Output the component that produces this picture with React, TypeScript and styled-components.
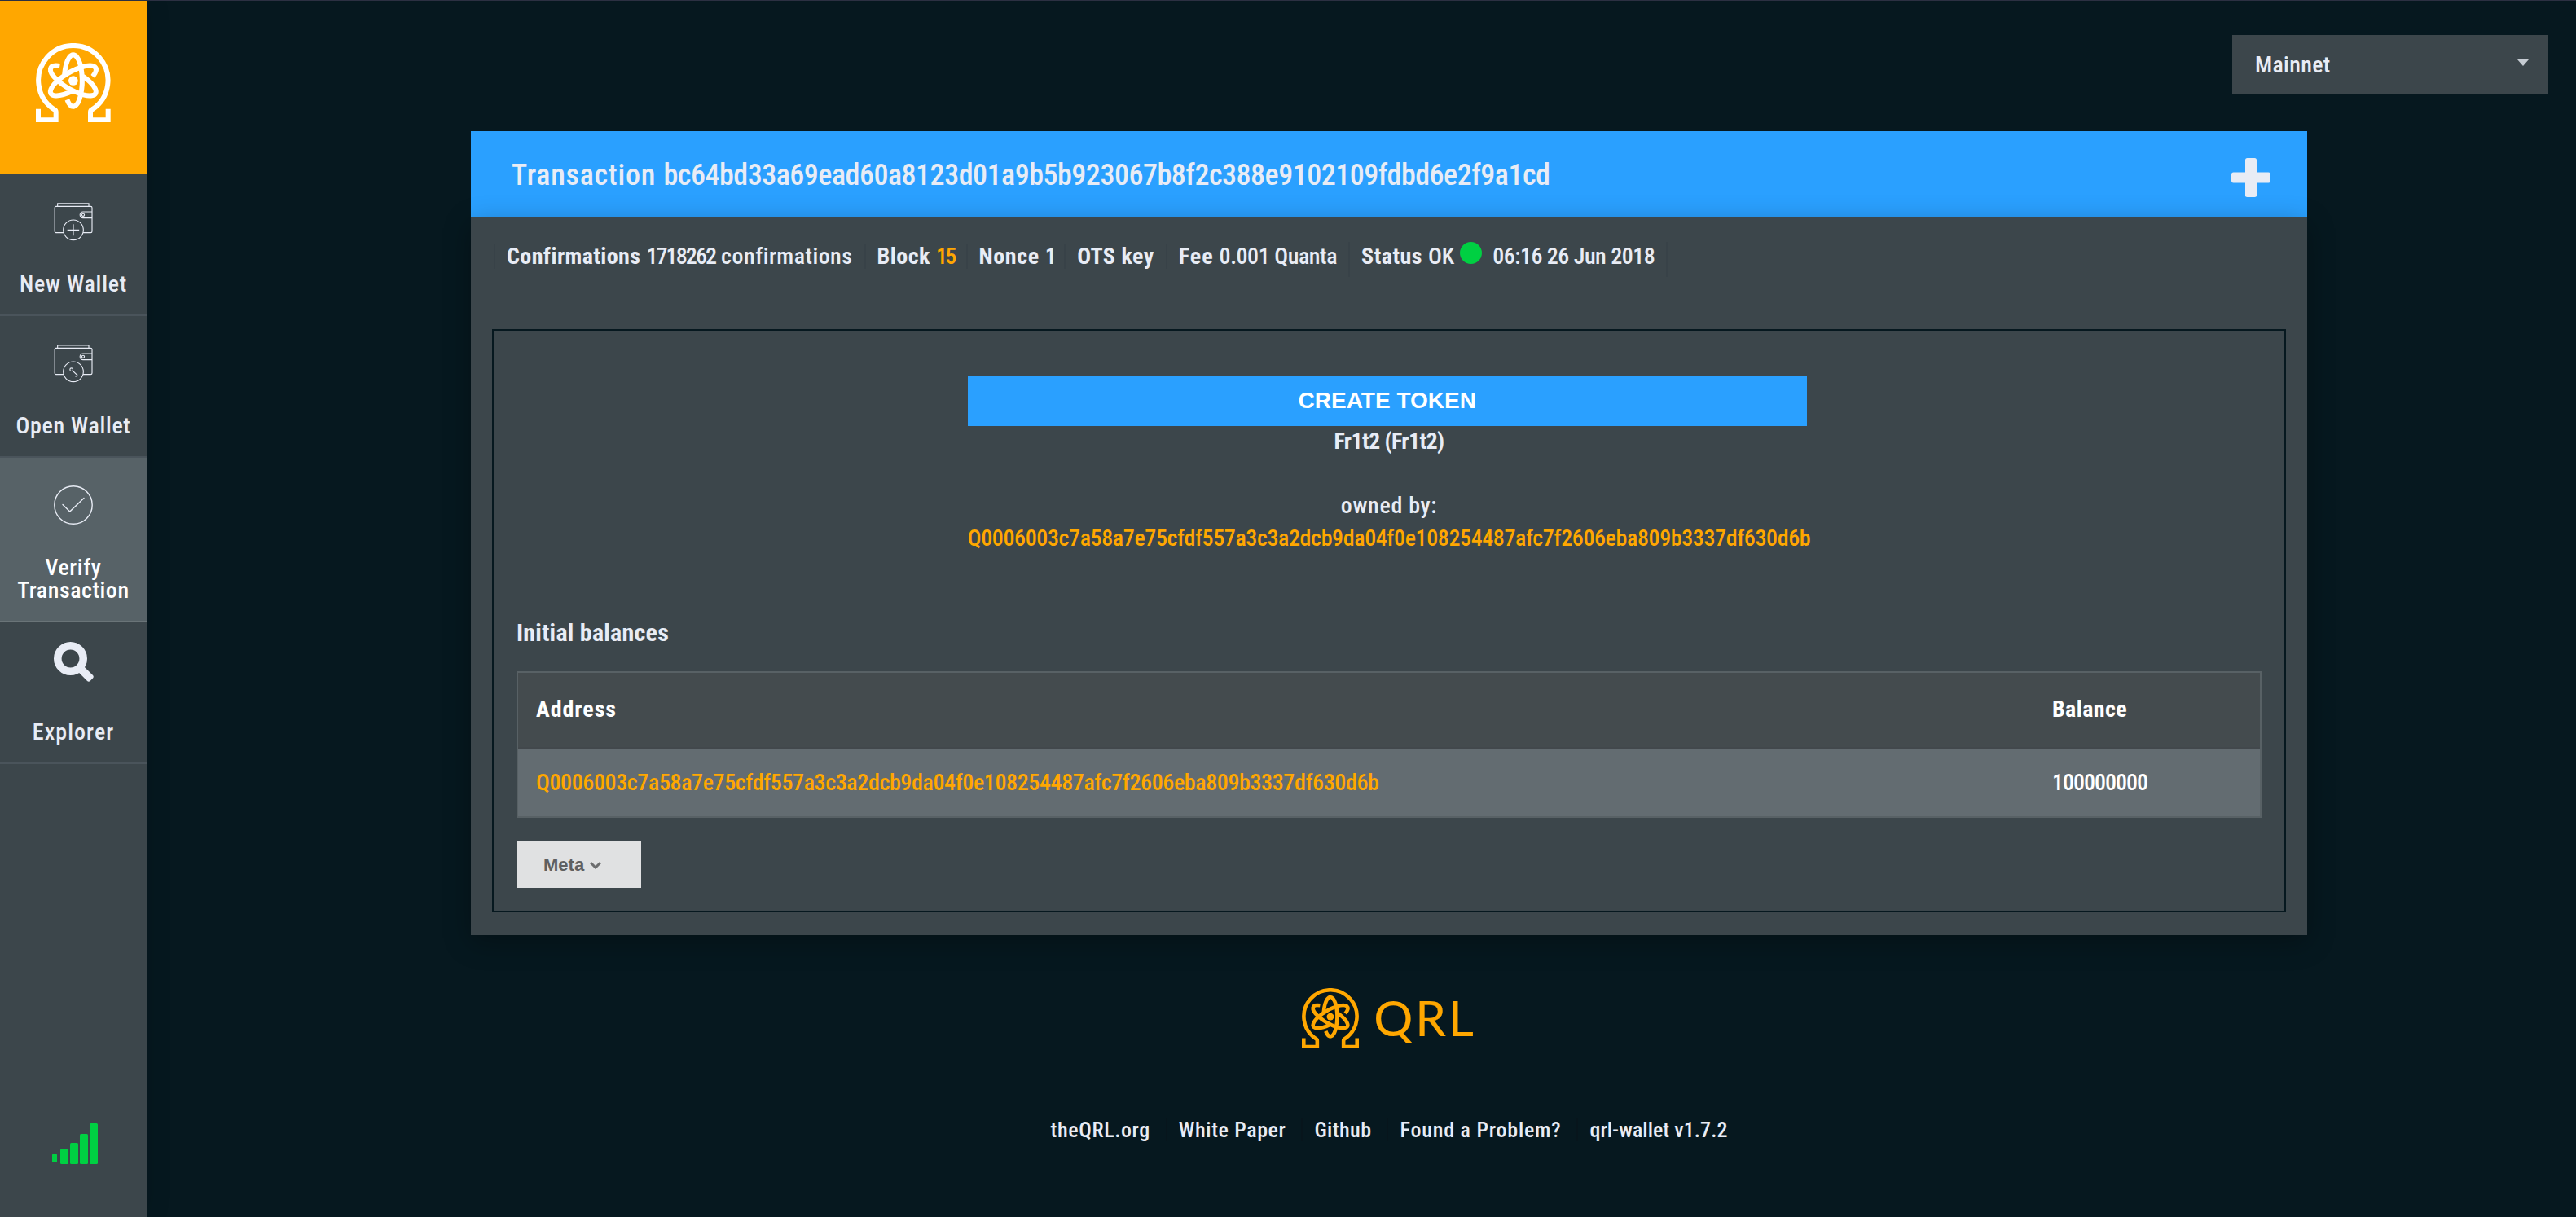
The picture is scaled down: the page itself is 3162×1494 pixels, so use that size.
import React from 'react';
import styled, { createGlobalStyle } from 'styled-components';

const c = {
  page: '#06181f',
  panel: '#3c464b',
  orange: '#ffa700',
  blue: '#2aa0ff',
  text: '#e8ecf5',
  green: '#00d042',
};
const din = `'Roboto Condensed', Roboto, 'Liberation Sans', sans-serif`;

const Global = createGlobalStyle`
  * { box-sizing: border-box; }
  body { margin: 0; background: ${c.page}; }
`;

const Page = styled.div`
  display: flex;
  height: 1494px;
  border-top: 1px solid #2c3042;
  font: 500 28px/28px ${din};
  color: ${c.text};
  overflow: hidden;
`;

const Text = styled.span<{ $ls?: number; $bold?: boolean; $color?: string }>`
  letter-spacing: ${p => p.$ls ?? 0}px;
  white-space: nowrap;
  ${p => p.$bold && 'font-weight: 700;'}
  ${p => p.$color && `color: ${p.$color};`}
`;

/* ---------- sidebar ---------- */
const Sidebar = styled.nav`
  display: flex;
  flex-direction: column;
  flex: none;
  width: 180px;
  background: ${c.panel};
  box-shadow: 0 0 30px rgba(0, 0, 0, 0.12);
`;
const Brand = styled.div`
  display: flex;
  justify-content: center;
  height: 213px;
  padding-top: 52px;
  background: ${c.orange};
`;
const NavItem = styled.a<{ $active?: boolean }>`
  display: flex;
  flex-direction: column;
  align-items: center;
  padding-bottom: 23px;
  border-bottom: 2px solid ${p => (p.$active ? '#6a7478' : '#4a545b')};
  background: ${p => (p.$active ? '#576267' : 'transparent')};
  color: ${p => (p.$active ? '#fff' : c.text)};
`;
const NavIcon = styled.div<{ $top: number }>`
  display: flex;
  height: 121px;
  padding-top: ${p => p.$top}px;
`;
const Signal = styled.div`
  display: flex;
  justify-content: center;
  margin-top: auto;
  padding: 0 0 65px 4px;
`;

/* ---------- content ---------- */
const Main = styled.main`
  display: flex;
  flex-direction: column;
  flex: 1;
`;
const TopBar = styled.div`
  display: flex;
  justify-content: flex-end;
  padding: 42px 34px 46px 0;
`;
const NetworkSelect = styled.div`
  display: flex;
  align-items: center;
  justify-content: space-between;
  width: 388px;
  height: 72px;
  padding: 2px 24px 0 28px;
  background: ${c.panel};
`;
const Caret = styled.i`
  margin-top: -7px;
  border: solid transparent;
  border-width: 8px 7px 0;
  border-top-color: #c6ccd3;
`;
const Card = styled.section`
  width: 2254px;
  margin-left: 398px;
`;
const CardHeader = styled.header`
  display: flex;
  align-items: center;
  justify-content: space-between;
  height: 106px;
  padding: 0 45px 0 50px;
  background: ${c.blue};
  svg { margin-top: 7px; }
`;
const Title = styled.div`
  display: flex;
  gap: 9.5px;
  margin-top: 2px;
  font-size: 36px;
`;
const CardBody = styled.div`
  padding: 30px 26px 28px;
  background: ${c.panel};
  box-shadow: 0 8px 32px rgba(0, 0, 0, 0.3);
`;
const Stats = styled.div`
  display: flex;
  align-items: baseline;
  height: 107px;
  padding-left: 2px;
`;
const Stat = styled.div<{ $tall?: boolean }>`
  display: flex;
  align-items: baseline;
  gap: 7px;
  padding: ${p => (p.$tall ? '0 14px 10px' : '0 14px')};
  border-left: 2px solid #384248;
  line-height: 30px;
  &:last-child { border-right: 2px solid #384248; }
`;
const Dot = styled.i`
  width: 27px;
  height: 27px;
  margin-right: 6px;
  border-radius: 50%;
  background: ${c.green};
`;
const Details = styled.div`
  display: flex;
  flex-direction: column;
  height: 716px;
  padding: 56px 28px 28px;
  border: 2px solid ${c.page};
`;
const Token = styled.div`
  display: flex;
  flex-direction: column;
  align-items: center;
  align-self: center;
  line-height: 39.5px;
`;
const TokenButton = styled.div`
  align-self: flex-start;
  width: 1030px;
  height: 61px;
  margin-bottom: -1px;
  background: ${c.blue};
  color: #fff;
  font: 700 28px/59px 'Liberation Sans', Arial, sans-serif;
  text-align: center;
`;
const Heading = styled.h4`
  margin: 77px 0 27px;
  font-size: 30px;
  font-weight: 700;
  line-height: 40px;
`;
const Table = styled.div`
  border: 2px solid #586165;
  color: #fff;
`;
const Row = styled.div<{ $head?: boolean }>`
  display: grid;
  grid-template-columns: 1861px 1fr;
  height: ${p => (p.$head ? 93 : 83)}px;
  line-height: ${p => (p.$head ? 89 : 83)}px;
  background: ${p => (p.$head ? '#444b4e' : '#636c71')};
  ${p => p.$head && 'border-bottom: 2px solid #42484c;'}
  > span { padding-left: 22px; }
`;
const MetaButton = styled.div`
  display: flex;
  align-items: center;
  gap: 7px;
  width: 153px;
  height: 58px;
  margin-top: 28px;
  padding: 2px 0 0 33px;
  background: #e0e1e2;
  color: #5f6061;
  font: 700 22px 'Liberation Sans', Arial, sans-serif;
`;

/* ---------- footer ---------- */
const Footer = styled.footer`
  display: flex;
  flex-direction: column;
  align-items: center;
  margin: 65px 0 0 68px;
`;
const FooterLogo = styled.div`
  display: flex;
  gap: 18px;
  height: 75px;
  margin-bottom: 85px;
  color: ${c.orange};
`;
const Wordmark = styled.span`
  margin-top: 6px;
  font: 400 60px/60px Lato, sans-serif;
  letter-spacing: 3px;
  -webkit-text-stroke: 0.2px ${c.orange};
`;
const Links = styled.div`
  display: flex;
  font-size: 26px;
`;
const Link = styled.a`
  padding: 0 19px 0 14px;
  border-right: 2px solid #07151c;
  &:last-child { border: 0; padding-right: 14px; }
`;

const ORBIT = 'M-32 -23A33 95 0 1 1 -22.3 70';
const QrlMark = ({ width, color }: { width: number; color: string }) => (
  <svg width={width} height={(width * 292) / 275} viewBox="132 160 275 292" fill="none" stroke={color} strokeWidth="18">
    <path d="M141 402V443H206V413Q206 407 198 403A128 128 0 1 1 341 403Q333 407 333 413V443H398V402" />
    <g transform="translate(269.5 298)">
      <path d={ORBIT} />
      <path d={ORBIT} transform="rotate(120)" />
      <path d={ORBIT} transform="rotate(-120)" />
      <circle r="17.5" fill={color} stroke="none" />
    </g>
  </svg>
);

const Wallet = ({ children }: { children: React.ReactNode }) => (
  <svg width="48" height="47" viewBox="198 746 144 141" fill="none" stroke={c.text} strokeWidth="3.4">
    <path d="M212 759V748.500H327V759" />
    <rect x="201.500" y="759" width="137.500" height="97" rx="5" />
    <path d="M339 779H306A11.500 11.500 0 0 0 306 802H339" />
    <circle cx="306" cy="790.500" r="4.800" />
    <circle cx="270" cy="846" r="37" fill={c.panel} />
    {children}
  </svg>
);

const VerifyIcon = () => (
  <svg width="48" height="48" viewBox="-24 -24 48 48" fill="none" stroke={c.text} strokeWidth="1.4">
    <circle r="23.200" />
    <path d="M-13 -0.500L-4.300 8L13 -8.500" strokeLinecap="round" />
  </svg>
);

const SearchIcon = () => (
  <svg width="52" height="50" viewBox="-2 0 52 50">
    <circle cx="20.500" cy="20.500" r="15.700" fill="none" stroke={c.text} strokeWidth="9.600" />
    <rect x="14" y="-4.900" width="22.500" height="9.800" rx="2.800" fill={c.text} transform="translate(20.5 20.5) rotate(45)" />
  </svg>
);

const Bars = () => (
  <svg width="56" height="50" viewBox="0 0 56 50" fill={c.green}>
    <rect y="38" width="6" height="10" rx="0.500" />
    <rect x="10" y="31" width="10" height="19" rx="1.500" />
    <rect x="22" y="24" width="10" height="26" rx="1.500" />
    <rect x="34" y="13" width="10" height="37" rx="1.500" />
    <rect x="46" y="0" width="10" height="50" rx="1.500" />
  </svg>
);

const ADDRESS = 'Q0006003c7a58a7e75cfdf557a3c3a2dcb9da04f0e108254487afc7f2606eba809b3337df630d6b';

export default function App() {
  return (
    <Page>
      <Global />
      <Sidebar>
        <Brand><QrlMark width={91.7} color="#fff" /></Brand>
        <NavItem>
          <NavIcon $top={35}><Wallet><path d="M248 846H291.500M270 825V867" /></Wallet></NavIcon>
          <Text $ls={0.8}>New Wallet</Text>
        </NavItem>
        <NavItem>
          <NavIcon $top={35}>
            <Wallet><circle cx="263" cy="838" r="5.500" /><path d="M267 842L284 858M284 856Q286 864 277 863" /></Wallet>
          </NavIcon>
          <Text $ls={0.7}>Open Wallet</Text>
        </NavItem>
        <NavItem $active>
          <NavIcon $top={34}><VerifyIcon /></NavIcon>
          <Text $ls={0.6}>Verify</Text>
          <Text $ls={0.55}>Transaction</Text>
        </NavItem>
        <NavItem>
          <NavIcon $top={24}><SearchIcon /></NavIcon>
          <Text $ls={1.1}>Explorer</Text>
        </NavItem>
        <Signal><Bars /></Signal>
      </Sidebar>
      <Main>
        <TopBar>
          <NetworkSelect><Text $ls={0.3}>Mainnet</Text><Caret /></NetworkSelect>
        </TopBar>
        <Card>
          <CardHeader>
            <Title>
              <Text $ls={0.75}>Transaction</Text>
              <Text $ls={-0.48}>bc64bd33a69ead60a8123d01a9b5b923067b8f2c388e9102109fdbd6e2f9a1cd</Text>
            </Title>
            <svg width="48" height="48" fill={c.text}>
              <rect x="17" width="14" height="48" rx="2.500" />
              <rect y="17.500" width="48" height="13" rx="2.500" />
            </svg>
          </CardHeader>
          <CardBody>
            <Stats>
              <Stat>
                <Text $bold $ls={0.4}>Confirmations</Text>
                <Text $ls={-1.9}>1718262</Text>
                <Text $ls={0.48}>confirmations</Text>
              </Stat>
              <Stat><Text $bold $ls={0.5}>Block</Text><Text $ls={-2.7} $color={c.orange}>15</Text></Stat>
              <Stat><Text $bold $ls={0.6}>Nonce</Text><Text $ls={-4.6}>1</Text></Stat>
              <Stat><Text $bold $ls={0.5}>OTS key</Text></Stat>
              <Stat><Text $bold $ls={1}>Fee</Text><Text $ls={-0.42}>0.001 Quanta</Text></Stat>
              <Stat $tall>
                <Text $bold $ls={0.5}>Status</Text>
                <Text>OK</Text>
                <Dot />
                <Text $ls={-0.5}>06:16 26 Jun 2018</Text>
              </Stat>
            </Stats>
            <Details>
              <Token>
                <TokenButton><Text>CREATE TOKEN</Text></TokenButton>
                <Text $bold $ls={-0.6}>Fr1t2 (Fr1t2)</Text>
                <br />
                <Text $ls={0.7}>owned by:</Text>
                <Text $ls={-0.38} $color={c.orange}>{ADDRESS}</Text>
              </Token>
              <Heading><Text $ls={0.25}>Initial balances</Text></Heading>
              <Table>
                <Row $head><Text $bold $ls={0.95}>Address</Text><Text $bold $ls={0.4}>Balance</Text></Row>
                <Row><Text $ls={-0.38} $color={c.orange}>{ADDRESS}</Text><Text $ls={-1}>100000000</Text></Row>
              </Table>
              <MetaButton>
                <Text>Meta</Text>
                <svg width="14" height="9" fill="none" stroke="#6c6d6e" strokeWidth="3"><path d="M1.200 1.200L7 7L12.800 1.200" /></svg>
              </MetaButton>
            </Details>
          </CardBody>
        </Card>
        <Footer>
          <FooterLogo><QrlMark width={70} color={c.orange} /><Wordmark>QRL</Wordmark></FooterLogo>
          <Links>
            <Link><Text $ls={0.6}>theQRL.org</Text></Link>
            <Link><Text $ls={0.6}>White Paper</Text></Link>
            <Link><Text $ls={0.4}>Github</Text></Link>
            <Link><Text $ls={0.78}>Found a Problem?</Text></Link>
            <Link><Text $ls={0.05}>qrl-wallet v1.7.2</Text></Link>
          </Links>
        </Footer>
      </Main>
    </Page>
  );
}
